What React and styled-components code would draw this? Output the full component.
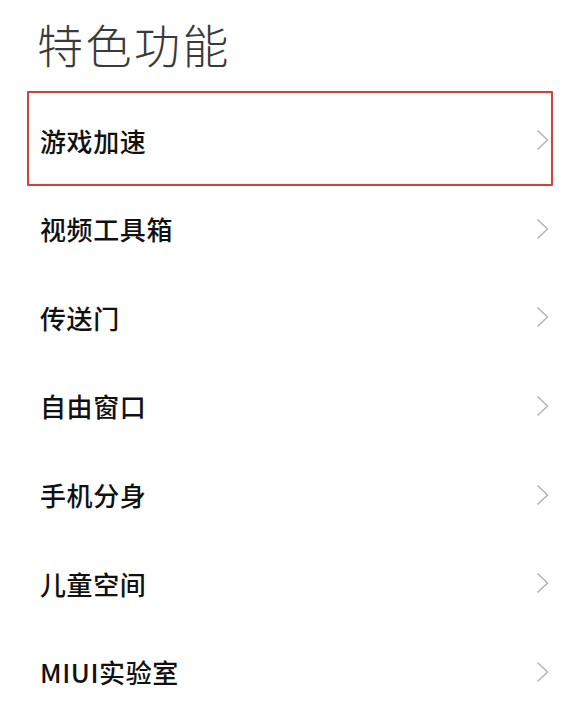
import React from 'react'
import styled, { createGlobalStyle } from 'styled-components'

const GlobalStyle = createGlobalStyle`
  html, body {
    margin: 0;
    padding: 0;
    background: #fff;
  }
  body {
    font-family: "Noto Sans CJK SC", "Noto Sans", sans-serif;
  }
`

const Page = styled.div`
  width: 585px;
  height: 705px;
  overflow: hidden;
  background: #fff;
`

const Title = styled.h1`
  margin: 0;
  padding: 12px 0 0 37px;
  height: 95.7px;
  box-sizing: border-box;
  font-size: 46px;
  font-weight: 300;
  line-height: 62px;
  color: #3a3a3a;
  letter-spacing: 2.5px;
`

const List = styled.div`
  display: flex;
  flex-direction: column;
`

const Row = styled.div`
  position: relative;
  height: 88.67px;
  display: flex;
  align-items: center;
  justify-content: space-between;
  padding: 0 36px 0 40px;
  box-sizing: border-box;
`

const Label = styled.span`
  font-family: "Noto Sans CJK SC", sans-serif;
  font-size: 26px;
  font-weight: 500;
  color: #111;
  letter-spacing: 0.6px;
`

const Highlight = styled.div`
  position: absolute;
  top: -5px;
  bottom: -1.5px;
  left: 26.5px;
  right: 32.5px;
  border: 2px solid #d6403c;
  border-radius: 1px;
  pointer-events: none;
`

const Chevron = () => (
  <svg width="13" height="22" viewBox="0 0 13 22">
    <path d="M1.5 1.5 L11.5 11 L1.5 20.5" fill="none" stroke="#b4b4b4" strokeWidth="1.5" />
  </svg>
)

const items = ['游戏加速', '视频工具箱', '传送门', '自由窗口', '手机分身', '儿童空间', 'MIUI实验室']

export default function App() {
  return (
    <Page>
      <GlobalStyle />
      <Title>特色功能</Title>
      <List>
        {items.map((item, i) => (
          <Row key={item}>
            {i === 0 && <Highlight />}
            <Label>{item}</Label>
            <Chevron />
          </Row>
        ))}
      </List>
    </Page>
  )
}
